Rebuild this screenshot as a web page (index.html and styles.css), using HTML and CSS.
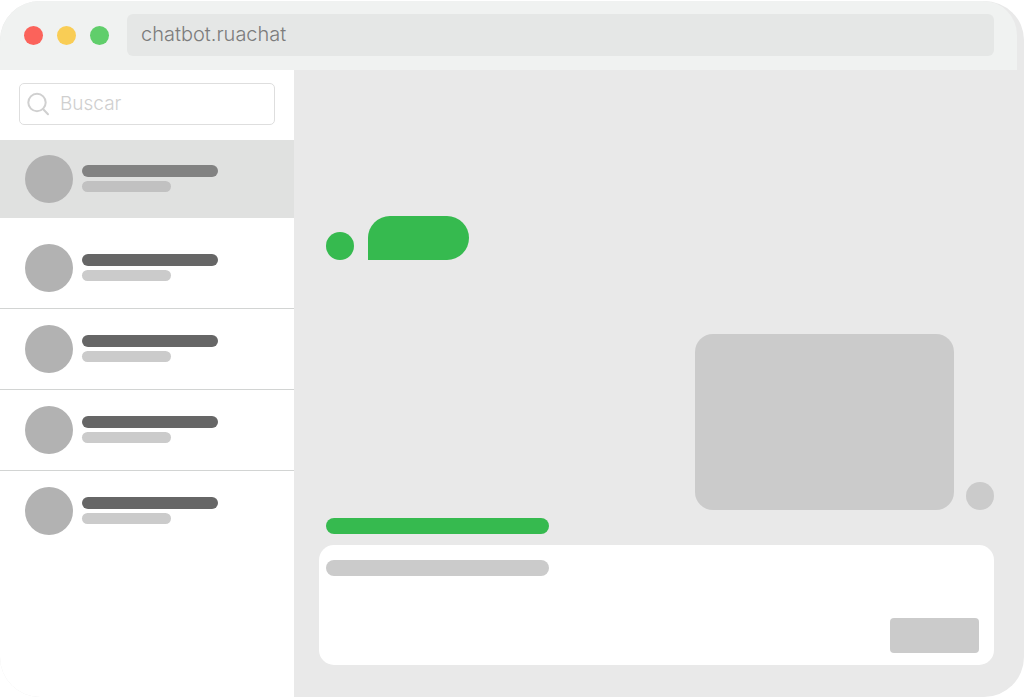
FILE: index.html
```html
<!DOCTYPE html>
<html lang="es">
<head>
<meta charset="utf-8">
<meta name="viewport" content="width=device-width, initial-scale=1">
<title>chatbot.ruachat</title>
<link rel="stylesheet" href="styles.css">
</head>
<body>
<div class="window">
  <header class="titlebar">
    <span class="light red"></span>
    <span class="light yellow"></span>
    <span class="light green"></span>
    <input class="address" type="text" value="chatbot.ruachat" aria-label="URL">
  </header>
  <div class="body">
    <aside class="sidebar">
      <label class="search">
        <svg class="search-icon" viewBox="0 0 24 24" aria-hidden="true"><circle cx="10" cy="10.5" r="8.7"/><path d="M16 17L21 22.3"/></svg>
        <input class="search-input" type="search" placeholder="Buscar" aria-label="Buscar">
      </label>
      <ul class="contacts">
        <li class="contact active"><span class="avatar"></span><span class="lines"><span class="name"></span><span class="preview"></span></span></li>
        <li class="contact first"><span class="avatar"></span><span class="lines"><span class="name"></span><span class="preview"></span></span></li>
        <li class="contact"><span class="avatar"></span><span class="lines"><span class="name"></span><span class="preview"></span></span></li>
        <li class="contact"><span class="avatar"></span><span class="lines"><span class="name"></span><span class="preview"></span></span></li>
        <li class="contact"><span class="avatar"></span><span class="lines"><span class="name"></span><span class="preview"></span></span></li>
      </ul>
    </aside>
    <main class="chat">
      <div class="messages">
        <div class="message received"><span class="dot"></span><div class="bubble"></div></div>
        <div class="message sent"><div class="bubble"></div><span class="dot"></span></div>
      </div>
      <div class="bar status"></div>
      <form class="composer">
        <div class="bar"></div>
        <button class="send" type="button" aria-label="Enviar"></button>
      </form>
    </main>
  </div>
</div>
</body>
</html>
```
FILE: styles.css
```css
* { box-sizing: border-box; }

body {
  margin: 0;
  background: #fff;
  font-family: Inter, "Open Sans", sans-serif;
}

.window {
  display: flex;
  flex-direction: column;
  min-height: 100vh;
  padding-top: 1px;
  border-radius: 40px;
  overflow: hidden;
  background: #e9e9e9 content-box;
}

.titlebar {
  display: flex;
  align-items: center;
  gap: 14px;
  margin-right: 7px;
  padding: 13px 23px 14px 24px;
  background: #f0f2f1;
  border-radius: 40px 34px 0 0;
}

.light {
  flex: none;
  width: 19px;
  height: 19px;
  border-radius: 50%;
}
.red { background: #fb635b; }
.yellow { background: #f9cd55; }
.green { background: #60ce6b; }

.address {
  flex: 1;
  min-width: 0;
  height: 42px;
  margin-left: 4px;
  padding: 0 14px 2px;
  border: 0;
  border-radius: 6px;
  background: #e5e7e6;
  color: #7c7c7c;
  font: 300 20px/24px Inter, "Open Sans", sans-serif;
}

.body {
  flex: 1;
  display: flex;
}

.sidebar {
  flex: none;
  width: 294px;
  background: #fff;
}

.search {
  display: flex;
  align-items: center;
  gap: 9px;
  height: 42px;
  margin: 13px 19px 15px;
  padding: 0 7px;
  border: 1px solid #dedede;
  border-radius: 5px;
}
.search-icon {
  flex: none;
  width: 24px;
  height: 24px;
  fill: none;
  stroke: #d0d0d0;
  stroke-width: 2;
  stroke-linecap: round;
}
.search-input {
  flex: 1;
  min-width: 0;
  padding: 0;
  border: 0;
  background: none;
  font: 300 19px/24px Inter, "Open Sans", sans-serif;
}
.search-input::placeholder { color: #cfcfcf; opacity: 1; }

.contacts {
  margin: 0;
  padding: 0;
  list-style: none;
}
.contact {
  display: flex;
  gap: 9px;
  padding: 16px 25px;
  border-bottom: 1px solid #d2d4d3;
}
.contact:last-child { border-bottom: 0; }
.contact.active {
  padding: 15px 25px;
  border-bottom: 0;
  background: #e0e1e0;
}
.contact.first { padding-top: 26px; }

.avatar {
  flex: none;
  width: 48px;
  height: 48px;
  border-radius: 50%;
  background: #b2b2b2;
}
.lines {
  display: flex;
  flex-direction: column;
  gap: 4px;
  padding-top: 10px;
}
.name {
  width: 136px;
  height: 12px;
  border-radius: 6px;
  background: #666;
}
.preview {
  width: 89px;
  height: 11px;
  border-radius: 6px;
  background: #cbcbcb;
}
.active .name { background: #828282; }
.active .preview { background: #c1c1c1; }

.chat {
  flex: 1;
  display: flex;
  flex-direction: column;
  min-width: 0;
  padding: 0 30px 32px 25px;
}

.messages {
  flex: 1;
  display: flex;
  flex-direction: column;
  justify-content: flex-end;
  gap: 74px;
  padding: 24px 0 8px 7px;
}
.message {
  display: flex;
  align-items: flex-end;
}
.dot {
  flex: none;
  width: 28px;
  height: 28px;
  border-radius: 50%;
}
.received { gap: 14px; }
.received .dot { background: #36ba4f; }
.received .bubble {
  width: 101px;
  height: 44px;
  border-radius: 22px 22px 22px 0;
  background: #36ba4f;
}
.sent {
  justify-content: flex-end;
  gap: 12px;
}
.sent .dot { background: #cbcbcb; }
.sent .bubble {
  width: 259px;
  height: 176px;
  border-radius: 18px;
  background: #cbcbcb;
}

.bar {
  width: 223px;
  height: 16px;
  border-radius: 8px;
  background: #cbcbcb;
}
.status {
  margin: 0 0 11px 7px;
  background: #36ba4f;
}

.composer {
  display: flex;
  flex-direction: column;
  justify-content: space-between;
  min-height: 120px;
  padding: 15px 15px 12px 7px;
  border-radius: 15px;
  background: #fff;
}
.send {
  align-self: flex-end;
  width: 89px;
  height: 35px;
  border: 0;
  border-radius: 4px;
  background: #cbcbcb;
}
```
